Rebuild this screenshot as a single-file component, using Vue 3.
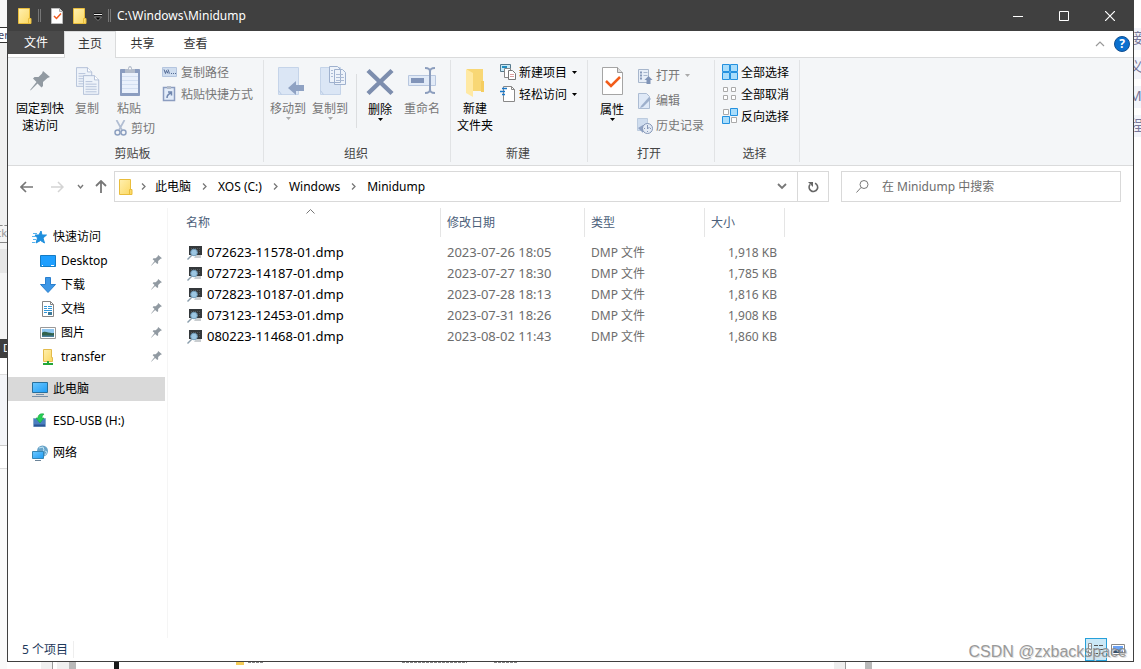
<script setup>
import { ref } from 'vue'

const query = ref('')
const tabs = ['主页', '共享', '查看']
const crumbs = ['此电脑', 'XOS (C:)', 'Windows', 'Minidump']
const pinned = [
  { icon: 'desktop', label: 'Desktop' },
  { icon: 'download', label: '下载' },
  { icon: 'document', label: '文档' },
  { icon: 'picture', label: '图片' },
  { icon: 'transfer', label: 'transfer' },
]
const places = [
  { icon: 'computer', label: '此电脑', active: true },
  { icon: 'usb', label: 'ESD-USB (H:)', active: false },
  { icon: 'network', label: '网络', active: false },
]
const files = [
  { name: '072623-11578-01.dmp', date: '2023-07-26 18:05', size: '1,918 KB' },
  { name: '072723-14187-01.dmp', date: '2023-07-27 18:30', size: '1,785 KB' },
  { name: '072823-10187-01.dmp', date: '2023-07-28 18:13', size: '1,816 KB' },
  { name: '073123-12453-01.dmp', date: '2023-07-31 18:26', size: '1,908 KB' },
  { name: '080223-11468-01.dmp', date: '2023-08-02 11:43', size: '1,860 KB' },
]
</script>

<template>
  <div class="desktop">
    <svg class="sprite" aria-hidden="true">
      <defs>
        <linearGradient id="gold" x1="0" y1="0" x2="1" y2="1"><stop offset="0" stop-color="#fff0b0" /><stop offset="1" stop-color="#fbd75f" /></linearGradient>
        <linearGradient id="sky" x1="0" y1="0" x2="1" y2="1"><stop offset="0" stop-color="#6cc8ff" /><stop offset="1" stop-color="#1e9cf5" /></linearGradient>
        <symbol id="folder" viewBox="0 0 14 16"><path d="M.5.5h11v10h1.500v5H.5z" fill="url(#gold)" stroke="#e9bd3c" /><path d="M10.500 15v-4.500h1.500" fill="none" stroke="#e9bd3c" /></symbol>
        <symbol id="pin" viewBox="0 0 20 20"><path d="M13 0l7 6-2.500 1-4.500 4v4l-1.500 1.500-4-4L1 19l-1 .5.500-1L6.500 11 3 7.500 4.500 6h4L12 2.500z" fill="#919aa2" /></symbol>
        <symbol id="paper" viewBox="0 0 20 23"><path d="M.5.500h13l5 5v17H.5z" fill="#eef3fa" stroke="#aab9d3" /><path d="M13.500.5v5h5" fill="#fff" stroke="#aab9d3" /><path d="M3 7.500h8M3 10.500h13M3 13.500h13M3 16.500h13M3 19.500h13" stroke="#acbbd4" /></symbol>
        <symbol id="arrow" viewBox="0 0 5 3"><path d="M0 0h5L2.500 3z" fill="currentColor" /></symbol>
      </defs>
    </svg>

    <div class="behind left" aria-hidden="true">
      <span class="l1"></span><span class="l2">er</span><span class="l3"></span><span class="l4">ck</span><span class="l5"></span><span class="l6"></span><span class="l7"></span><span class="l8">D</span><span class="l9"></span><span class="l10"></span><span class="l11"></span>
    </div>
    <div class="behind right" aria-hidden="true"><span>接</span><span>义</span><span>M</span><span>程</span></div>
    <div class="behind bottom" aria-hidden="true">
      <svg width="900" height="7"><path d="M41 0h11v7H41zM57 0h12v7H57z" fill="#f0f0f0" /><path d="M69 0h7v7h-7z" fill="#b9b9b9" /><path d="M52.500 0v7" stroke="#999" /><path d="M114 0h5v7h-5z" fill="#181818" /><path d="M236 0h8v3h-8z" fill="#f4cc57" /><path d="M248 .5h16M402 .5h65M494 .5h24" stroke="#888" stroke-dasharray="3 1" /><path d="M834 0h11v7h-11z" fill="#eee" /><path d="M845.500 0v7" stroke="#999" /><path d="M865 0h7v7h-7z" fill="#b9b9b9" /></svg>
    </div>

    <main class="window">
      <header class="titlebar">
        <svg class="fold" width="14" height="16"><use href="#folder" /></svg>
        <span class="bars"></span>
        <button class="quick" aria-label="属性"><svg width="12" height="16"><path d="M.5.500h8l3 3v12H.5z" fill="#fff" stroke="#bbb" /><path d="M8.500.5v3h3" fill="#ddd" stroke="#aaa" /><path d="M3 8l2.500 2.500L10 5.500" fill="none" stroke="#f05a1e" stroke-width="1.500" /></svg></button>
        <button class="quick newfold" aria-label="新建文件夹"><svg width="14" height="16"><use href="#folder" /></svg></button>
        <button class="quick more" aria-label="自定义快速访问工具栏"><svg width="8" height="8"><path d="M0 1.500h8" stroke="#111" stroke-width="3" /><path d="M0 1.500h8" stroke="#eee" /><path d="M.5 4h7L4 7.500z" fill="#000" stroke="#bbb" stroke-width=".6" /></svg></button>
        <span class="bars"></span>
        <h1>C:\Windows\Minidump</h1>
        <button class="ctl" aria-label="最小化"><svg width="10" height="10"><path d="M0 5.500h10" stroke="#fff" /></svg></button>
        <button class="ctl" aria-label="最大化"><svg width="10" height="10"><path d="M.5.5h9v9h-9z" fill="none" stroke="#fff" /></svg></button>
        <button class="ctl" aria-label="关闭"><svg width="10" height="10"><path d="M0 0l10 10M10 0L0 10" stroke="#fff" stroke-width="1.200" /></svg></button>
      </header>

      <nav class="tabs">
        <button class="filetab">文件</button>
        <button v-for="(t, i) in tabs" :key="t" class="tab" :class="{ on: i === 0 }">{{ t }}</button>
        <span class="grow"></span>
        <button class="collapse" aria-label="折叠功能区"><svg width="10" height="6"><path d="M1 5l4-4 4 4" fill="none" stroke="#999" stroke-width="1.200" /></svg></button>
        <button class="help" aria-label="帮助">?</button>
      </nav>

      <section class="ribbon">
        <div class="group clip">
          <div class="tools">
            <button class="big pinbtn"><svg width="32" height="32" viewBox="0 0 32 32"><use href="#pin" x="6" y="5" width="20" height="20" /></svg><span>固定到快<br>速访问</span></button>
            <button class="big copy" disabled><svg width="32" height="32"><use href="#paper" x="5" y="1" width="17" height="20" /><use href="#paper" x="12" y="9" width="17" height="20" /></svg><span>复制</span></button>
            <div class="pastecol">
              <button class="big" disabled><svg width="32" height="32"><path d="M7.500 3.500h19v26h-19z" fill="#8b9dc0" stroke="#8b9dc0" /><path d="M9 7h16v20H9z" fill="#eaf1fc" /><path d="M9 10.500h16M9 14.500h16M9 18.500h16M9 22.500h16" stroke="#d3dff1" /><path d="M12 3h3c0-4 4-4 4 0h3v4H12z" fill="#b3bccb" /><circle cx="17" cy="2.500" r="1" fill="#fff" /></svg><span>粘贴</span></button>
              <button class="small cut" disabled><svg width="13" height="16"><path d="M2.500 0l5.500 10M10.500 0L5 10" stroke="#b1bed3" stroke-width="1.700" fill="none" /><circle cx="3.500" cy="12.500" r="2.500" fill="none" stroke="#8ea1c1" stroke-width="1.500" /><circle cx="9.500" cy="12.500" r="2.500" fill="none" stroke="#8ea1c1" stroke-width="1.500" /></svg><span>剪切</span></button>
            </div>
            <div class="stack">
              <button class="small" disabled><svg width="16" height="16"><path d="M.5 3.500h14v9H.5z" fill="#cfddef" stroke="#b4c5df" /><path d="M2 5.500l1.500 4 1-3 1.500 3M6 5.500l1.500 4" stroke="#536a94" fill="none" /><path d="M9 9.500h1M11 9.500h1M13 9.500h1" stroke="#536a94" /></svg><span>复制路径</span></button>
              <button class="small" disabled><svg width="16" height="16"><path d="M1.500 1.500h11v13h-11z" fill="#e3ecf9" stroke="#8b9dc0" stroke-width="1.500" /><path d="M5 0h4v3H5z" fill="#b3bccb" /><path d="M5 12c0-3 1-4 4-5M6 6h3.500v3.500" fill="none" stroke="#7086ae" stroke-width="1.500" /></svg><span>粘贴快捷方式</span></button>
            </div>
          </div>
          <h2>剪贴板</h2>
        </div>

        <div class="group org">
          <div class="tools">
            <button class="big" disabled><svg width="32" height="32"><path d="M6.500 1.500h20v27h-20z" fill="#dbe6f5" stroke="#c5d4e9" /><path d="M6.500 24.500l3 4" stroke="#b9cbe4" /><path d="M16 22l8-7v4h8v6h-8v4z" fill="#8fa2c3" /></svg><span>移动到</span><svg class="drop" width="5" height="3"><use href="#arrow" /></svg></button>
            <button class="big" disabled><svg width="32" height="32"><path d="M6.500 1.500h20v27h-20z" fill="#dbe6f5" stroke="#c5d4e9" /><path d="M6.500 24.500l3 4" stroke="#b9cbe4" /><path d="M15.500.5h8l3 3v13h-11zM20.500 3.500h8l3 3v12h-11z" fill="#eef3fa" stroke="#9fb1ce" /><path d="M17 4.500h2M17 7.500h2M17 10.500h2M22 8.500h7M22 11.500h8M22 14.500h8" stroke="#acbbd4" /></svg><span>复制到</span><svg class="drop" width="5" height="3"><use href="#arrow" /></svg></button>
            <i class="split"></i>
            <button class="big del"><svg width="32" height="32"><path d="M4 4.500l24 23M28 4.500l-24 23" stroke="#7d8eae" stroke-width="4.500" /></svg><span>删除</span><svg class="drop" width="5" height="3"><use href="#arrow" /></svg></button>
            <button class="big" disabled><svg width="32" height="32"><path d="M2.500 9.500h27v10h-27z" fill="#e1eaf7" stroke="#b8c7df" /><path d="M5 12h13v5H5z" fill="#8194b9" /><path d="M19 2c4 0 5 1 5 4v17c0 3-1 4-5 4M29 2c-4 0-5 1-5 4v17c0 3 1 4 5 4" fill="none" stroke="#8b9dbd" stroke-width="2" /></svg><span>重命名</span></button>
          </div>
          <h2>组织</h2>
        </div>

        <div class="group create">
          <div class="tools">
            <button class="big"><svg width="32" height="32"><path d="M8 3h16v22H8z" fill="#f8d775" /><path d="M7 3l7 4v24l-7-4z" fill="#ffe9a3" /><path d="M14 26h11V15h-3v11" fill="#f5cd60" /></svg><span>新建<br>文件夹</span></button>
            <div class="stack">
              <button class="small"><svg width="16" height="16"><path d="M.5.500h10v7H.5z" fill="#c8eaf8" stroke="#55798d" /><path d="M2 2h5v2H2z" fill="#218dbf" /><path d="M4.500 4.500h6v9h-6z" fill="#fff" stroke="#888" /><path d="M8.500 6.500h4l3 3v6h-7z" fill="#fff" stroke="#777" /><path d="M10 10.500h4M10 12.500h4" stroke="#dca0a0" /></svg><span>新建项目</span><svg class="drop" width="5" height="3"><use href="#arrow" /></svg></button>
              <button class="small"><svg width="16" height="16"><path d="M3.500.500h8l3 3v12h-11z" fill="#fff" stroke="#888" /><path d="M11.500.5v3h3" fill="none" stroke="#888" /><path d="M2 2.500h5M0 5.500h5M2 8.500h3" stroke="#1979ca" stroke-width="1.300" /></svg><span>轻松访问</span><svg class="drop" width="5" height="3"><use href="#arrow" /></svg></button>
            </div>
          </div>
          <h2>新建</h2>
        </div>

        <div class="group open">
          <div class="tools">
            <button class="big del"><svg width="32" height="32"><path d="M6.500 1.500h15l5 5v22h-20z" fill="#fff" stroke="#a5a5a5" /><path d="M21.500 1.500v5h5" fill="#ddd" stroke="#999" /><path d="M10 15l5 5 9-9" fill="none" stroke="#f25d1b" stroke-width="2.500" /></svg><span>属性</span><svg class="drop" width="5" height="3"><use href="#arrow" /></svg></button>
            <div class="stack tall">
              <button class="small" disabled><svg width="16" height="16"><path d="M1.500 1.500h10v13h-10z" fill="#e7eef8" stroke="#a7b6cc" /><path d="M3 4.500h2M3 7.500h2M3 10.500h2" stroke="#8799ba" stroke-width="2" /><path d="M6.500 4.500h4M6.500 7.500h4" stroke="#a8b7cd" /><path d="M11.500 8l4 4h-2v4h-4v-4h-2z" fill="#8094b7" /></svg><span>打开</span><svg class="drop" width="5" height="3"><use href="#arrow" /></svg></button>
              <button class="small" disabled><svg width="16" height="16"><path d="M1.500.5h8l3 3v12h-11z" fill="#dfe9f7" stroke="#acbcd3" /><path d="M4 13l8-9 2 2-8 8-3 1z" fill="#9eb0cc" /></svg><span>编辑</span></button>
              <button class="small" disabled><svg width="16" height="16"><path d="M.5.500h10v12H.5z" fill="#cfddef" stroke="#bdccdf" /><path d="M1 10l5-3v8z" fill="#8fa2c3" /><circle cx="10.500" cy="10.500" r="5" fill="#e4ebf5" stroke="#8496b6" /><path d="M10.500 7v4l2-2M7 10.500h1M13 10.500h1M10.500 13v1" fill="none" stroke="#8496b6" /></svg><span>历史记录</span></button>
            </div>
          </div>
          <h2>打开</h2>
        </div>

        <div class="group select">
          <div class="tools">
            <div class="stack">
              <button class="small"><svg width="16" height="16"><path d="M.5.5h7v7h-7zM8.500.5h7v7h-7zM.5 8.500h7v7h-7zM8.500 8.500h7v7h-7z" fill="#a9ddfb" stroke="#2491df" /></svg><span>全部选择</span></button>
              <button class="small"><svg width="16" height="16"><path d="M1.500 1.500h4v4h-4zM9.500 1.500h4v4h-4zM1.500 9.500h4v4h-4zM9.500 9.500h4v4h-4z" fill="#fff" stroke="#aaa" /></svg><span>全部取消</span></button>
              <button class="small"><svg width="16" height="16"><path d="M1.500 1.500h5v5h-5zM9.500 9.500h5v5h-5z" fill="#fff" stroke="#aaa" /><path d="M8.500.5h7v7h-7zM.5 8.500h7v7h-7z" fill="#a9ddfb" stroke="#2491df" /></svg><span>反向选择</span></button>
            </div>
          </div>
          <h2>选择</h2>
        </div>
      </section>

      <section class="location">
        <button class="nav" aria-label="后退"><svg width="14" height="12"><path d="M1 6h12M6 1L1 6l5 5" fill="none" stroke="#777" stroke-width="1.700" /></svg></button>
        <button class="nav" aria-label="前进"><svg width="14" height="12"><path d="M1 6h12M8 1l5 5-5 5" fill="none" stroke="#d4d4d4" stroke-width="1.500" /></svg></button>
        <button class="nav recent" aria-label="最近位置"><svg width="7" height="6"><path d="M1 1l2.500 3L6 1" fill="none" stroke="#777" stroke-width="1.400" /></svg></button>
        <button class="nav up" aria-label="上移"><svg width="12" height="13"><path d="M6 13V1M1 6l5-5 5 5" fill="none" stroke="#777" stroke-width="1.800" /></svg></button>
        <div class="address">
          <svg width="14" height="16"><use href="#folder" /></svg>
          <template v-for="c in crumbs" :key="c">
            <svg class="chev" width="5" height="7"><path d="M1 .5l3 3-3 3" fill="none" stroke="#777" stroke-width="1.300" /></svg>
            <a href="#">{{ c }}</a>
          </template>
          <span class="grow"></span>
          <button class="hist" aria-label="历史位置"><svg width="10" height="7"><path d="M1 1l4 4 4-4" fill="none" stroke="#777" stroke-width="1.800" /></svg></button>
          <button class="reload" aria-label="刷新"><svg width="12" height="12"><path d="M8 2.200a4.300 4.300 0 1 1-5 1.300" fill="none" stroke="#666" stroke-width="1.600" /><path d="M1 1h5v5z" fill="#666" /></svg></button>
        </div>
        <label class="search">
          <svg width="13" height="13"><circle cx="8" cy="4.500" r="4" fill="none" stroke="#777" /><path d="M5 7.500l-4.500 5" stroke="#777" /></svg>
          <input v-model="query" type="text" aria-label="搜索" placeholder="在 Minidump 中搜索">
        </label>
      </section>

      <section class="content">
        <aside class="side">
          <a href="#" class="place"><svg width="16" height="16"><path d="M9 2l1 4 4.500 0-3.500 3 1.500 5-4-2.500L4 14l1.500-5L3 6h4z" fill="#1f8fdd" stroke="#1f8fdd" /><path d="M1 4.500h4M0 7.500h4M1 10.500h3M0 13.500h3" stroke="#57b3ee" /></svg>快速访问</a>
          <a v-for="p in pinned" :key="p.label" href="#" class="place sub">
            <svg width="16" height="16">
              <g v-if="p.icon === 'desktop'"><path d="M.5 2.500h15v11H.5z" fill="#1e9fff" stroke="#147bc4" /><path d="M2 12.500h1M11 12.500h3" stroke="#fff" /></g>
              <g v-else-if="p.icon === 'download'"><path d="M5.500.5h5v7h5L8 15.500.5 7.500h5z" fill="#3d97e6" stroke="#2a7fce" /></g>
              <g v-else-if="p.icon === 'document'"><path d="M2.500.500h8l3 3v12h-11z" fill="#fff" stroke="#858585" /><path d="M10.500.5v3h3" fill="none" stroke="#858585" /><path d="M4 5.500h3M4 7.500h3M8 5.500h4M8 7.500h4M4 9.500h8M4 11.500h3" stroke="#3197d9" /><path d="M8 11h4v3H8z" fill="#3d7a9a" /></g>
              <g v-else-if="p.icon === 'picture'"><path d="M.5 2.500h15v11H.5z" fill="#fff" stroke="#999" /><path d="M2 4h12v8H2z" fill="#8fc6f0" /><path d="M2 8c3-3 7 1 12 0v4H2z" fill="#32634e" /><path d="M2 10.500h12v1.500H2z" fill="#497f9d" /></g>
              <g v-else><path d="M3.500.5h8v8h1v4h-9z" fill="url(#gold)" stroke="#e3bb4c" /><path d="M8 12v3M3 15h10" stroke="#23a638" stroke-width="2" /></g>
            </svg>{{ p.label }}
            <svg class="tack" width="11" height="11"><use href="#pin" /></svg>
          </a>
          <a v-for="p in places" :key="p.label" href="#" class="place root" :class="{ active: p.active }">
            <svg width="16" height="16">
              <g v-if="p.icon === 'computer'"><path d="M.5 1.500h15v10H.5z" fill="url(#sky)" stroke="#276f9c" /><path d="M4 13.500h8M0 15.500h16" stroke="#7790a8" /></g>
              <g v-else-if="p.icon === 'usb'"><path d="M1.500 5.500h12v8h-12z" fill="#4a7fc0" stroke="#86a9cc" /><path d="M2 12.500h11" stroke="#2a5596" stroke-width="2" /><path d="M12 1c-4-1-6 1-6 4H4l4 5 4-5h-2c0-1 0-2 2-4z" fill="#25cf54" stroke="#18a23f" stroke-width=".6" /></g>
              <g v-else><circle cx="10.500" cy="6" r="5.500" fill="#69a4c9" /><path d="M7 3l4-1 1 3-2 3M13 6l2 1-2 3" fill="none" stroke="#c2e6f6" /><path d="M.5 6.500h11v7H.5z" fill="url(#sky)" stroke="#3586b5" /><path d="M3 15.500h6" stroke="#6c8499" /></g>
            </svg>{{ p.label }}
          </a>
        </aside>

        <div class="files">
          <table>
            <thead>
              <tr><th class="name"><svg class="sort" width="9" height="5"><path d="M.5 4.500l4-4 4 4" fill="none" stroke="#777" /></svg>名称</th><th class="date">修改日期</th><th class="type">类型</th><th class="size">大小</th></tr>
            </thead>
            <tbody>
              <tr v-for="f in files" :key="f.name">
                <td class="name"><div class="filecell"><svg width="16" height="16"><path d="M2 1h13v9H2z" fill="#34383b" /><path d="M4 3.500h10M4 5.500h10M4 7.500h10" stroke="#54595c" stroke-dasharray="1 1" /><path d="M9 10h5v3H7z" fill="#c9cdd0" /><circle cx="7" cy="7.500" r="3.300" fill="#9cc6e2" stroke="#6f9bb9" /><path d="M5 10l-4.500 4.500" stroke="#8a9dac" stroke-width="1.500" /></svg>{{ f.name }}</div></td>
                <td class="date">{{ f.date }}</td>
                <td>DMP 文件</td>
                <td class="size">{{ f.size }}</td>
              </tr>
            </tbody>
          </table>
        </div>
      </section>

      <footer class="status">
        <span class="count">5 个项目</span>
        <span class="grow"></span>
        <button class="view on" aria-label="详细信息"><svg width="16" height="14"><path d="M.5.5h3v12h-3z" fill="#fff" stroke="#888" /><path d="M2 2.500v1M2 6v1M2 9.500v1" stroke="#44708c" /><path d="M6 2.500h10M6 6.500h10M6 10.500h10" stroke="#555" stroke-dasharray="4 1" /></svg></button>
        <button class="view" aria-label="大图标"><svg width="14" height="12"><path d="M.5.5h13v10H.5z" fill="#fff" stroke="#888" /><path d="M2 2h10v7H2z" fill="#6ba3f5" /><path d="M2 7l4-2 6 3v1H2z" fill="#35506c" /></svg></button>
      </footer>
    </main>
    <div class="credit">CSDN @zxbackspace</div>
  </div>
</template>

<style>
body { margin: 0; }
</style>

<style scoped>
* { box-sizing: border-box; }
.desktop { position: relative; display: flex; min-height: 100vh; padding: 0 7px 7px; overflow: hidden; background: #fff; font: 12px/17px "Noto Sans", "Noto Sans CJK SC", sans-serif; color: #000; }
.sprite { position: absolute; width: 0; height: 0; }
svg { flex: none; display: block; }
button { margin: 0; padding: 0; border: 0; background: none; font: inherit; color: inherit; }
a { color: inherit; text-decoration: none; }
h1, h2 { margin: 0; font: inherit; }
.grow { flex: 1; }

.behind { position: absolute; overflow: hidden; }
.behind span { display: block; white-space: nowrap; }
.left { top: 0; bottom: 0; left: 0; width: 7px; background: #fafafa; font-size: 11px; line-height: 14px; }
.l1 { height: 27px; background: #f7f7f7; }
.l2 { height: 16px; border: solid #333; border-width: 1px 0; background: #fff; color: #446; text-indent: -2px; }
.l3 { height: 182px; background: #f0f0f0; }
.l4 { height: 18px; border: solid #888; border-width: 1px 0; border-top-style: dashed; background: #f4f4f4; color: #999; text-indent: -4px; }
.l5 { height: 6px; background: #f4f4f4; }
.l6 { height: 24px; background: #e6e6e6; }
.l7 { height: 66px; background: #f4f4f4; }
.l8 { height: 19px; padding-left: 3px; background: #3e3e3e; color: #fff; line-height: 18px; }
.l9 { height: 17px; border-bottom: 1px solid #ddd; background: #fff; }
.l10 { height: 71px; border-bottom: 1px solid #ccc; background: #f4f5f8; }
.l11 { height: 23px; border: solid #ddd; border-width: 0 0 1px; background: #fff; }
.right { top: 28px; right: 0; width: 7px; font-size: 14px; color: #77779a; }
.right span { height: 22px; margin-bottom: 7px; background: #f2f4fa; line-height: 20px; text-indent: -5px; }
.bottom { bottom: 0; left: 0; height: 7px; }

.window { position: relative; flex: 1; min-width: 0; display: flex; flex-direction: column; border: solid #404040; border-width: 0 1px 1px; background: #fff; }
.titlebar { display: flex; align-items: center; height: 31px; padding-left: 10px; background: #404040; color: #fff; }
.bars { width: 3px; height: 13px; margin: 0 10px 0 6px; border: solid #777; border-width: 0 1px; }
.newfold { margin: 0 7px 0 10px; }
.more { width: 8px; margin-top: 2px; }
.more + .bars { margin-right: 6px; }
.titlebar h1 { flex: 1; font-size: 12px; }
.ctl { display: grid; place-items: center; width: 46px; height: 31px; }

.tabs { display: flex; height: 27px; border-bottom: 1px solid #dadbdc; }
.filetab { width: 56px; height: 23px; background: #4a4a4a; color: #fff; }
.tab { width: 53px; height: 26px; padding-bottom: 1px; color: #333; }
.tab.on { width: 52px; height: 27px; padding-bottom: 3px; border: 1px solid #dadbdc; border-bottom: 0; background: #f5f6f7; }
.collapse { width: 20px; display: grid; place-items: center; }
.help { align-self: center; width: 16px; height: 16px; margin: 0 3px 0 4px; border: 1px solid #124f91; border-radius: 50%; background: #0a70cf; color: #fff; font-weight: 700; line-height: 14px; }

.ribbon { display: flex; min-height: 108px; padding: 2px 0 3px; border-bottom: 1px solid #dadbdc; background: #f4f6f8; }
.group { display: flex; flex-direction: column; justify-content: space-between; border-right: 1px solid #e1e3e5; }
.group h2 { padding-right: 6px; text-align: center; color: #444; }
.tools { display: flex; align-items: flex-start; }
.big { display: flex; flex-direction: column; align-items: center; width: 40px; padding-top: 6px; white-space: nowrap; }
.big > span { margin-top: 2px; }
.big.del > span { margin-top: 3px; }
.small { display: flex; align-items: center; gap: 3px; height: 22px; white-space: nowrap; }
.small .drop { margin-left: 2px; }
button:disabled { color: #777; }
button:disabled .drop { color: #aaa; }
.stack { padding-top: 1px; }
.tall { padding-top: 3px; }
.tall .small { height: 25px; }
.clip { width: 256px; padding-left: 6px; }
.group.clip h2 { padding-right: 12px; }
.pinbtn { width: 52px; }
.copy { width: 38px; margin: 0 4px 0 2px; }
.pastecol { width: 52px; }
.pastecol .big { width: 38px; }
.cut { gap: 4px; margin-left: 4px; }
.org { width: 187px; padding-left: 4px; }
.org .big + .big { margin-left: 2px; }
.split { width: 1px; height: 54px; margin: 14px 3px 0 6px; background: #dcdee0; }
.create { width: 137px; padding-left: 4px; }
.create .stack, .open .stack { margin-left: 5px; }
.open { width: 127px; padding-left: 4px; }
.select { width: 85px; padding-left: 7px; }
.group.open h2 { padding-right: 8px; }
.group.select h2 { padding-right: 12px; }

.location { display: flex; align-items: center; padding: 5px 12px 6px; }
.nav { display: grid; place-items: center; width: 14px; height: 31px; margin-right: 16px; }
.recent { width: 8px; margin: 0 11px 0 -4px; }
.up { width: 12px; margin-right: 7px; }
.address { display: flex; flex: 1; align-items: center; height: 31px; padding-left: 4px; border: 1px solid #d9d9d9; }
.address a { padding-bottom: 1px; }
.chev { margin: 0 9px 0 8px; }
a + .chev { margin: 0 11px; }
.hist { display: grid; place-items: center; width: 30px; height: 29px; }
.reload { display: grid; place-items: center; width: 31px; height: 29px; border-left: 1px solid #d9d9d9; }
.search { display: flex; align-items: center; width: 280px; height: 31px; margin-left: 12px; padding-left: 14px; border: 1px solid #d9d9d9; }
.search input { flex: 1; min-width: 0; margin-left: 13px; padding: 0; border: 0; outline: 0; background: none; font: inherit; }
.search input::placeholder { color: #6d6d6d; opacity: 1; }

.content { display: flex; flex: 1; }
.side { width: 160px; padding: 17px 2px 0 0; border-right: 1px solid #f5f5f5; }
.place { display: flex; align-items: center; gap: 5px; height: 24px; padding: 0 0 1px 24px; }
.sub { padding: 0 3px 1px 32px; }
.tack { margin-left: auto; }
.root { margin-top: 8px; }
.active { background: #d9d9d9; }
.files { flex: 1; padding-left: 12px; }
table { table-layout: fixed; width: 605px; border-collapse: separate; border-spacing: 0; }
th { position: relative; height: 29px; padding: 0 0 0 6px; border-right: 1px solid #e5e5e5; color: #4c607a; font-weight: 400; text-align: left; }
th.name { width: 261px; }
th.date { width: 144px; }
th.type { width: 120px; }
th.size { width: 80px; }
.sort { position: absolute; top: 1px; left: 126px; }
tbody::before { content: ""; display: block; height: 5px; }
td { height: 21px; padding: 0 0 0 6px; color: #6d6d6d; }
.filecell { display: flex; align-items: center; gap: 4px; padding-left: 1px; color: #000; }
td.name, td.date { font-size: 13px; }
td.size { padding: 0 8px 0 0; text-align: right; }

.status { display: flex; align-items: center; height: 23px; padding: 0 4px 0 14px; color: #1e395b; }
.count { padding-right: 5px; border-right: 1px solid #eee; }
.view { display: grid; place-items: center; width: 22px; height: 23px; }
.view.on { border: 1px solid #26a0da; background: #cbe8f6; }
.credit { position: absolute; right: 14px; bottom: 8px; color: #888; opacity: .85; font: 16px/18px "Liberation Sans", sans-serif; text-shadow: 1px 1px 0 #ddd; }
</style>
